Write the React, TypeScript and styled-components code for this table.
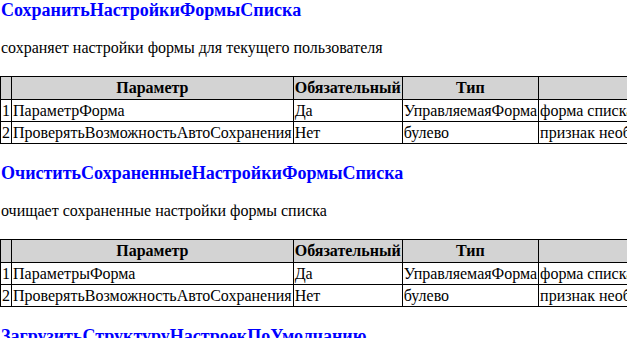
import styled, { createGlobalStyle } from 'styled-components'

const GlobalStyle = createGlobalStyle`
  html, body {
    margin: 0;
    padding: 0;
    background: #fff;
    overflow: hidden;
  }
  body {
    font-family: "Liberation Serif", "Times New Roman", serif;
    font-size: 16px;
    color: #000;
  }
`

const Page = styled.div`
  padding: 0 0 0 1px;
`

const MethodBlock = styled.section`
  margin-bottom: 19px;
`

const MethodTitle = styled.h3`
  margin: 0 0 18px;
  font-size: 18px;
  line-height: 21px;
  font-weight: bold;
  color: #0000ff;
`

const MethodText = styled.p`
  margin: 0 0 19px;
  line-height: 18px;
`

const ParamTable = styled.table`
  border-collapse: collapse;
  margin-left: -1px;
`

const HeadCell = styled.th`
  border: 1px solid #000;
  background: #d3d3d3;
  padding: 1px;
  line-height: 20px;
  font-weight: bold;
  text-align: center;
  white-space: nowrap;
`

const Cell = styled.td`
  border: 1px solid #000;
  padding: 1px;
  line-height: 19px;
  text-align: left;
  white-space: nowrap;
`

interface IParam {
  name: string
  required: string
  type: string
  description: string
}

interface IMethod {
  title: string
  text: string
  params: IParam[]
}

const methods: IMethod[] = [
  {
    title: 'СохранитьНастройкиФормыСписка',
    text: 'сохраняет настройки формы для текущего пользователя',
    params: [
      {
        name: 'ПараметрФорма',
        required: 'Да',
        type: 'УправляемаяФорма',
        description: 'форма списка, настройки которой необходимо сохранить',
      },
      {
        name: 'ПроверятьВозможностьАвтоСохранения',
        required: 'Нет',
        type: 'булево',
        description: 'признак необходимости проверки возможности автосохранения',
      },
    ],
  },
  {
    title: 'ОчиститьСохраненныеНастройкиФормыСписка',
    text: 'очищает сохраненные настройки формы списка',
    params: [
      {
        name: 'ПараметрыФорма',
        required: 'Да',
        type: 'УправляемаяФорма',
        description: 'форма списка, настройки которой необходимо очистить',
      },
      {
        name: 'ПроверятьВозможностьАвтоСохранения',
        required: 'Нет',
        type: 'булево',
        description: 'признак необходимости проверки возможности автосохранения',
      },
    ],
  },
  {
    title: 'ЗагрузитьСтруктуруНастроекПоУмолчанию',
    text: 'загружает структуру настроек по умолчанию',
    params: [],
  },
]

const App = () => {
  return (
    <>
      <GlobalStyle />
      <Page>
        {methods.map((method) => (
          <MethodBlock key={method.title}>
            <MethodTitle>{method.title}</MethodTitle>
            <MethodText>{method.text}</MethodText>
            {method.params.length > 0 && (
              <ParamTable>
                <thead>
                  <tr>
                    <HeadCell></HeadCell>
                    <HeadCell>Параметр</HeadCell>
                    <HeadCell>Обязательный</HeadCell>
                    <HeadCell>Тип</HeadCell>
                    <HeadCell>Описание</HeadCell>
                  </tr>
                </thead>
                <tbody>
                  {method.params.map((param, i) => (
                    <tr key={param.name}>
                      <Cell>{i + 1}</Cell>
                      <Cell>{param.name}</Cell>
                      <Cell>{param.required}</Cell>
                      <Cell>{param.type}</Cell>
                      <Cell>{param.description}</Cell>
                    </tr>
                  ))}
                </tbody>
              </ParamTable>
            )}
          </MethodBlock>
        ))}
      </Page>
    </>
  )
}

export default App
